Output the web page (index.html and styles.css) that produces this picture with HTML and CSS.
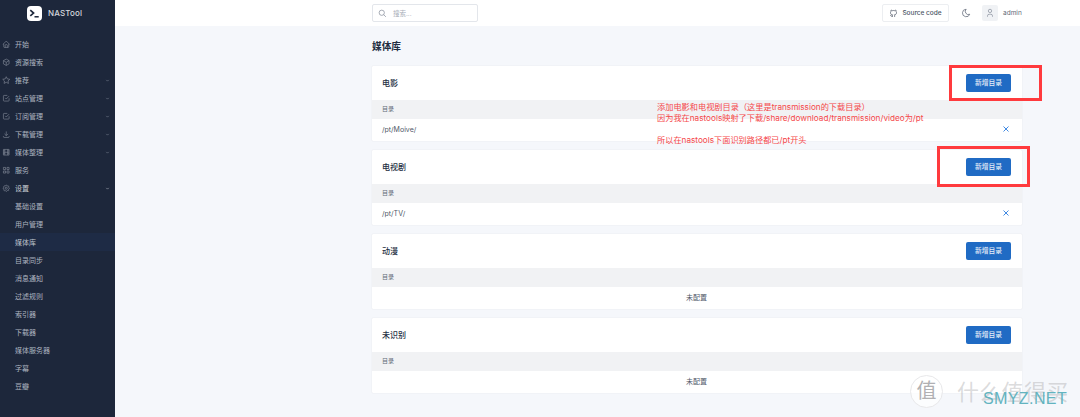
FILE: index.html
```html
<!DOCTYPE html>
<html lang="zh">
<head>
<meta charset="utf-8">
<title>NASTool</title>
<link rel="stylesheet" href="styles.css">
</head>
<body>
<div class="app">
  <aside class="sidebar">
    <div class="brand">
      <span class="logo"><svg viewBox="0 0 16 16" width="15" height="15"><path d="M3.5 4.5 7 7.5 3.5 10.5" fill="none" stroke="#1d273b" stroke-width="1.8"/><path d="M8 11.5h4.5" stroke="#1d273b" stroke-width="1.6"/></svg></span>
      <span class="brand-name">NASTool</span>
    </div>
    <nav class="nav">
      <a class="item"><svg class="ico" viewBox="0 0 24 24"><path d="M5 12H3l9-9 9 9h-2M5 12v7a2 2 0 0 0 2 2h10a2 2 0 0 0 2-2v-7M9 21v-6a2 2 0 0 1 2-2h2a2 2 0 0 1 2 2v6"/></svg><span>开始</span></a>
      <a class="item"><svg class="ico" viewBox="0 0 24 24"><path d="m12 3 8 4.5v9L12 21l-8-4.5v-9L12 3M12 12l8-4.5M12 12v9M12 12 4 7.5"/></svg><span>资源搜索</span></a>
      <a class="item"><svg class="ico" viewBox="0 0 24 24"><path d="m12 17.75-6.17 3.24 1.18-6.87-5-4.87 6.9-1 3.08-6.25 3.08 6.25 6.9 1-5 4.87 1.18 6.87z"/></svg><span>推荐</span><svg class="chev" viewBox="0 0 24 24"><path d="m6 9 6 6 6-6"/></svg></a>
      <a class="item"><svg class="ico" viewBox="0 0 24 24"><path d="m9 11 3 3 8-8M20 12v6a2 2 0 0 1-2 2H6a2 2 0 0 1-2-2V6a2 2 0 0 1 2-2h9"/></svg><span>站点管理</span><svg class="chev" viewBox="0 0 24 24"><path d="m6 9 6 6 6-6"/></svg></a>
      <a class="item"><svg class="ico" viewBox="0 0 24 24"><path d="m9 11 3 3 8-8M20 12v6a2 2 0 0 1-2 2H6a2 2 0 0 1-2-2V6a2 2 0 0 1 2-2h9"/></svg><span>订阅管理</span><svg class="chev" viewBox="0 0 24 24"><path d="m6 9 6 6 6-6"/></svg></a>
      <a class="item"><svg class="ico" viewBox="0 0 24 24"><path d="M4 17v2a2 2 0 0 0 2 2h12a2 2 0 0 0 2-2v-2M7 11l5 5 5-5M12 4v12"/></svg><span>下载管理</span><svg class="chev" viewBox="0 0 24 24"><path d="m6 9 6 6 6-6"/></svg></a>
      <a class="item"><svg class="ico" viewBox="0 0 24 24"><path d="M4 4h16v16H4zM8 4v16M16 4v16M4 8h4M4 16h4M4 12h16M16 8h4M16 16h4"/></svg><span>媒体整理</span><svg class="chev" viewBox="0 0 24 24"><path d="m6 9 6 6 6-6"/></svg></a>
      <a class="item"><svg class="ico" viewBox="0 0 24 24"><path d="M4 4h6v6H4zM14 4h6v6h-6zM4 14h6v6H4zM14 14h6v6h-6z"/></svg><span>服务</span></a>
      <a class="item active-parent"><svg class="ico" viewBox="0 0 24 24"><path d="M10.3 4.3c.4-1.8 3-1.8 3.4 0a1.7 1.7 0 0 0 2.6 1.1c1.5-.9 3.3.8 2.4 2.4a1.7 1.7 0 0 0 1 2.5c1.8.4 1.8 3 0 3.4a1.7 1.7 0 0 0-1 2.6c.9 1.5-.9 3.3-2.4 2.4a1.7 1.7 0 0 0-2.6 1c-.4 1.8-3 1.8-3.4 0a1.7 1.7 0 0 0-2.6-1c-1.5.9-3.3-.9-2.4-2.4a1.7 1.7 0 0 0-1-2.6c-1.8-.4-1.8-3 0-3.4a1.7 1.7 0 0 0 1-2.5c-.9-1.6.9-3.3 2.4-2.4a1.7 1.7 0 0 0 2.6-1.1"/><circle cx="12" cy="12" r="3"/></svg><span>设置</span><svg class="chev" viewBox="0 0 24 24"><path d="m6 9 6 6 6-6"/></svg></a>
      <a class="item sub">基础设置</a>
      <a class="item sub">用户管理</a>
      <a class="item sub current">媒体库</a>
      <a class="item sub">目录同步</a>
      <a class="item sub">消息通知</a>
      <a class="item sub">过滤规则</a>
      <a class="item sub">索引器</a>
      <a class="item sub">下载器</a>
      <a class="item sub">媒体服务器</a>
      <a class="item sub">字幕</a>
      <a class="item sub">豆瓣</a>
    </nav>
  </aside>
  <div class="main">
    <header class="topbar">
      <div class="search">
        <svg viewBox="0 0 24 24"><circle cx="10" cy="10" r="7"/><path d="m21 21-6-6"/></svg>
        <span>搜索...</span>
      </div>
      <div class="top-right">
        <a class="source"><svg viewBox="0 0 24 24"><path d="M9 19c-4.3 1.4-4.3-2.500-6-3m12 5v-3.500c0-1 .1-1.400-.5-2 2.800-.3 5.500-1.400 5.500-6a4.600 4.600 0 0 0-1.300-3.200 4.200 4.200 0 0 0-.1-3.200s-1.100-.3-3.500 1.300a12.300 12.300 0 0 0-6.200 0C6.500 2.800 5.400 3.100 5.400 3.100a4.200 4.200 0 0 0-.1 3.200A4.600 4.600 0 0 0 4 9.500c0 4.600 2.700 5.700 5.500 6-.6.600-.6 1.200-.5 2V21"/></svg>Source code</a>
        <svg class="moon" viewBox="0 0 24 24"><path d="M12 3h.4a7.500 7.500 0 0 0 8.600 12A9 9 0 1 1 12 3"/></svg>
        <span class="avatar"><svg viewBox="0 0 24 24"><circle cx="12" cy="7" r="4"/><path d="M6 21v-2a4 4 0 0 1 4-4h4a4 4 0 0 1 4 4v2"/></svg></span>
        <span class="user">admin</span>
      </div>
    </header>
    <main class="page">
      <h1 class="title">媒体库</h1>
      <section class="card">
        <div class="card-head"><h2>电影</h2><button class="btn">新增目录</button></div>
        <div class="thead">目录</div>
        <div class="row"><span>/pt/Moive/</span><svg class="x" viewBox="0 0 24 24"><path d="M18 6 6 18M6 6l12 12"/></svg></div>
      </section>
      <section class="card">
        <div class="card-head"><h2>电视剧</h2><button class="btn">新增目录</button></div>
        <div class="thead">目录</div>
        <div class="row"><span>/pt/TV/</span><svg class="x" viewBox="0 0 24 24"><path d="M18 6 6 18M6 6l12 12"/></svg></div>
      </section>
      <section class="card">
        <div class="card-head"><h2>动漫</h2><button class="btn">新增目录</button></div>
        <div class="thead">目录</div>
        <div class="row empty">未配置</div>
      </section>
      <section class="card">
        <div class="card-head"><h2>未识别</h2><button class="btn">新增目录</button></div>
        <div class="thead">目录</div>
        <div class="row empty">未配置</div>
      </section>
    </main>
  </div>
</div>
<div class="mark mark-one"></div>
<div class="mark mark-two"></div>
<div class="note">
  <p>添加电影和电视剧目录（这里是transmission的下载目录）</p>
  <p>因为我在nastools映射了下载/share/download/transmission/video为/pt</p>
  <p class="gap">所以在nastools下面识别路径都已/pt开头</p>
</div>
<div class="wm">
  <span class="wm-badge">值</span>
  <span class="wm-text">什么值得买</span>
  <span class="wm-site">SMYZ.NET</span>
</div>
</body>
</html>
```
FILE: styles.css
```css
* { box-sizing: border-box; }
html, body { margin: 0; height: 100%; overflow: hidden; }
body {
  font-family: Inter, "Noto Sans CJK SC", sans-serif;
  color: #1d273b;
  background: #f5f7fb;
  position: relative;
}
.app { display: flex; height: 417px; }
.sidebar { width: 115px; flex: none; background: #1d273b; color: #aeb5c0; }
.brand { height: 35px; padding: 6px 0 0 27px; display: flex; align-items: flex-start; gap: 6px; }
.logo { width: 15px; height: 15px; border-radius: 4px; background: #fff; display: block; }
.logo svg { display: block; }
.brand-name { font-size: 8px; font-weight: 500; line-height: 15px; color: #d5d8dd; letter-spacing: .15px; }
.nav { display: flex; flex-direction: column; }
.item { height: 18px; display: flex; align-items: center; padding: 0 5px 0 2px; font-size: 7px; gap: 4.5px; }
.ico { width: 8.500px; height: 8.500px; flex: none; fill: none; stroke: #8d95a3; stroke-width: 1.6; }
.item span { flex: 1; }
.chev { width: 5px; height: 5px; fill: none; stroke: #8d95a3; stroke-width: 2.4; }
.active-parent { color: #c9cdd4; }
.active-parent .chev { stroke: #c9cdd4; }
.sub { padding-left: 15px; }
.current { background: #1e2b45; color: #bfc4cd; }
.main { flex: 1; min-width: 0; display: flex; flex-direction: column; }
.topbar { height: 26px; flex: none; background: #fff; display: flex; align-items: center; justify-content: space-between; padding: 0 58px 0 257px; }
.search { width: 106px; height: 18px; border: 1px solid #e3e6eb; border-radius: 2px; display: flex; align-items: center; padding-left: 5px; gap: 6px; font-size: 6.500px; color: #a8aeb8; }
.search svg { width: 9px; height: 9px; fill: none; stroke: #7d8592; stroke-width: 1.8; }
.top-right { display: flex; align-items: center; }
.source { width: 67px; height: 18px; border: 1px solid #eceef1; border-radius: 2px; display: flex; align-items: center; justify-content: center; gap: 4px; font-size: 6.500px; font-weight: 500; color: #4d5666; }
.source svg { width: 9px; height: 9px; fill: none; stroke: #4d5666; stroke-width: 2; }
.moon { width: 10px; height: 10px; margin: 0 11px 0 12px; fill: none; stroke: #5c6575; stroke-width: 1.8; }
.avatar { width: 16px; height: 16px; background: #f0f2f5; border-radius: 2px; display: flex; align-items: center; justify-content: center; }
.avatar svg { width: 10px; height: 10px; fill: none; stroke: #7a8290; stroke-width: 1.5; }
.user { font-size: 6.500px; color: #626976; margin-left: 5px; width: 19px; }
.page { width: 650px; margin-left: 257px; display: flex; flex-direction: column; gap: 9px; }
.title { font-size: 9.700px; line-height: 14px; font-weight: 600; margin: 14px 0 3px; color: #232e42; }
.card { height: 75px; background: #fff; border-radius: 1px; box-shadow: 0 0 1px rgba(29,39,59,.16); display: flex; flex-direction: column; }
.card-head { height: 34px; padding: 0 11px 0 10px; display: flex; align-items: center; justify-content: space-between; }
.card-head h2 { margin: 0 0 2px; font-size: 8px; font-weight: 500; color: #232e42; }
.btn { width: 45px; height: 18px; border: 0; border-radius: 2px; background: #206bc4; color: #e4edf8; font: 500 6.800px Inter, "Noto Sans CJK SC", sans-serif; padding: 0 0 1px; margin-bottom: 1px; }
.thead { height: 19px; background: #f1f2f4; padding: 0 0 2px 10px; display: flex; align-items: center; font-size: 6px; color: #626976; }
.row { height: 22px; padding: 0 11px 2px 10px; display: flex; align-items: center; justify-content: space-between; font-size: 7px; color: #4f5868; }
.x { width: 10px; height: 10px; flex: none; fill: none; stroke: #2f7fe0; stroke-width: 2.2; }
.empty { justify-content: center; }
.mark { position: absolute; border: 3.500px solid #ff3a3d; }
.mark-one { left: 949px; top: 65px; width: 93px; height: 36px; }
.mark-two { left: 937px; top: 146px; width: 93px; height: 41px; }
.note { position: absolute; left: 657px; top: 101.500px; font-size: 8.200px; line-height: 11px; color: #f5474a; white-space: nowrap; }
.note p { margin: 0; }
.note .gap { margin-top: 11px; }
.wm { position: absolute; left: 910px; top: 375px; width: 170px; height: 42px; }
.wm-badge { position: absolute; left: 0; top: 0; width: 33px; height: 33px; border-radius: 50%; background: rgba(255,255,255,.7); border: 1px solid #e8e8ea; color: #b0b0b3; font-size: 20px; line-height: 30px; text-align: center; }
.wm-text { position: absolute; left: 47px; top: 3px; font-size: 22px; line-height: 28px; letter-spacing: .3px; color: rgba(170,170,172,.42); white-space: nowrap; }
.wm-site { position: absolute; left: 73px; top: 14px; font: 500 16px/20px "Liberation Sans", sans-serif; color: #62b3bf; letter-spacing: .4px; white-space: nowrap; }
```
